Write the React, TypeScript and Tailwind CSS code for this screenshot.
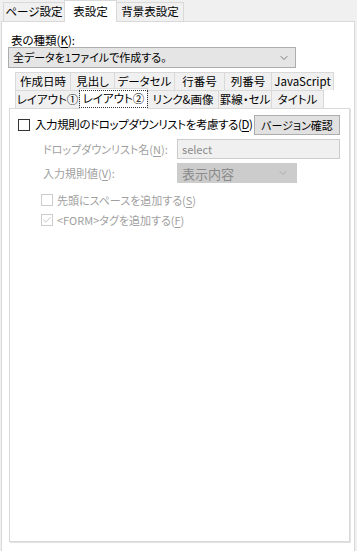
import { ChevronDown, Check } from 'lucide-react';

const font = "font-['Noto_Sans_CJK_JP','Noto_Sans',sans-serif] [font-feature-settings:'palt']";

function Tab({ label, w, active }: { label: string; w: string; active?: boolean }) {
  return (
    <div
      className={`flex shrink-0 items-center justify-center whitespace-nowrap border border-b-0 border-[#d9d9d9] leading-none ${w} ${
        active ? 'relative z-10 -mt-[2px] -mb-px h-[21px] bg-white' : 'h-[18px] bg-[#f0f0f0]'
      } -ml-px first:ml-0`}
    >
      {active ? (
        <span className="px-[3px] py-[2px] outline-1 outline-dotted outline-[#333]">{label}</span>
      ) : (
        label
      )}
    </div>
  );
}

function Box({ checked, disabled }: { checked?: boolean; disabled?: boolean }) {
  return (
    <span
      className={`flex h-[12px] w-[12px] shrink-0 items-center justify-center border bg-white ${
        disabled ? 'border-[#cccccc]' : 'border-[#333333]'
      }`}
    >
      {checked && <Check size={10} strokeWidth={1.5} className="text-[#a0a0a0]" />}
    </span>
  );
}

function Mn({ k }: { k: string }) {
  return <span className="underline underline-offset-2">{k}</span>;
}

export default function App() {
  return (
    <div className={`${font} h-[551px] w-[357px] overflow-hidden whitespace-nowrap bg-[#f0f0f0] text-[11px] leading-none text-black`}>
      {/* top tabs */}
      <div className="flex h-[21px] items-end pl-[3px] text-[11.5px]">
        <div className="flex h-[19px] w-[62px] items-center justify-center border border-b-0 border-[#d9d9d9] bg-[#f0f0f0]">ページ設定</div>
        <div className="relative z-10 -mb-px -ml-px flex h-[22px] w-[53px] items-center justify-center border border-b-0 border-[#d9d9d9] bg-white">表設定</div>
        <div className="-ml-px flex h-[19px] w-[68px] items-center justify-center border border-b-0 border-[#d9d9d9] bg-[#f0f0f0]">背景表設定</div>
      </div>
      <div className="ml-px h-[560px] w-[354px] border border-[#d9d9d9] bg-white">
        <div className="flex h-[24px] items-end pl-[9px] text-[11.5px]">
          表の種類(<Mn k="K" />):
        </div>
        <div className="ml-[6px] mt-[1px] flex h-[21px] w-[288px] items-center justify-between border border-[#adadad] bg-[#e5e5e5] pl-[4px] pr-[5px]">
          <span>全データを1ファイルで作成する。</span>
          <ChevronDown size={12} strokeWidth={1.5} className="text-[#555]" />
        </div>

        {/* inner tabs */}
        <div className="ml-[7px] mt-[4px] w-[341px]">
          <div className="flex h-[18px] pl-[6px] text-[11.5px]">
            <Tab label="作成日時" w="w-[56px]" />
            <Tab label="見出し" w="w-[45px]" />
            <Tab label="データセル" w="w-[61px]" />
            <Tab label="行番号" w="w-[51px]" />
            <Tab label="列番号" w="w-[48px]" />
            <Tab label="JavaScript" w="w-[63px]" />
          </div>
          <div className="flex h-[18px] items-end pl-[6px] text-[11.5px]">
            <Tab label="レイアウト①" w="w-[65px]" />
            <Tab label="レイアウト②" w="w-[69px]" active />
            <Tab label="リンク&画像" w="w-[72px]" />
            <Tab label="罫線・セル" w="w-[54px]" />
            <Tab label="タイトル" w="w-[53px]" />
          </div>
          <div className="h-[434px] border border-[#d9d9d9] bg-white pl-[8px] pr-[9px] pt-[6px] shadow-[1px_1px_0_#e3e3e3]">
            <div className="flex h-[20px] items-center justify-between">
              <label className="flex items-center gap-[5px]">
                <Box />
                <span className="text-[11.5px] tracking-[-0.4px]">
                  入力規則のドロップダウンリストを考慮する(<Mn k="D" />)
                </span>
              </label>
              <div className="flex h-[20px] w-[86px] items-center justify-center border border-[#adadad] bg-[#e1e1e1]">バージョン確認</div>
            </div>
            <div className="mt-[4px] flex items-center pl-[25px] text-[#a0a0a0]">
              <span className="w-[134px]">
                ドロップダウンリスト名(<Mn k="N" />):
              </span>
              <div className="flex h-[20px] flex-1 items-center border border-[#cccccc] bg-[#f0f0f0] px-[4px] text-[#8a8a8a]">select</div>
            </div>
            <div className="mt-[4px] flex items-center pl-[25px] text-[#a0a0a0]">
              <span className="w-[134px]">
                入力規則値(<Mn k="V" />):
              </span>
              <div className="flex h-[20px] w-[120px] items-center justify-between border border-[#cccccc] bg-[#cccccc] pl-[4px] pr-[7px] text-[13px] text-[#8a8a8a]">
                <span>表示内容</span>
                <ChevronDown size={12} strokeWidth={1.5} className="text-[#a0a0a0]" />
              </div>
            </div>
            <label className="mt-[11px] flex h-[12px] items-center gap-[4px] pl-[23px]">
              <Box disabled />
              <span className="text-[#a0a0a0]">
                先頭にスペースを追加する(<Mn k="S" />)
              </span>
            </label>
            <label className="mt-[8px] flex h-[12px] items-center gap-[4px] pl-[23px]">
              <Box disabled checked />
              <span className="text-[#a0a0a0]">
                &lt;FORM&gt;タグを追加する(<Mn k="F" />)
              </span>
            </label>
          </div>
        </div>
      </div>
    </div>
  );
}
